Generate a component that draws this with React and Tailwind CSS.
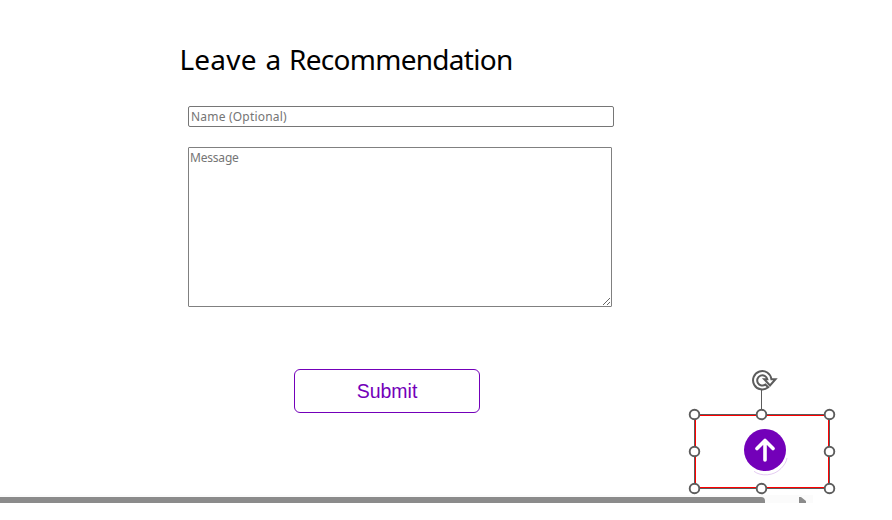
const HANDLES = [
  [694.5, 414.5], [761.5, 414.5], [829.5, 414.5],
  [694.5, 451.5], [829.5, 451.5],
  [694.5, 488.5], [761.5, 488.5], [829.5, 488.5],
];

function ScrollTopSelection() {
  return (
    <svg className="absolute left-[680px] top-[360px] h-[140px] w-[165px]" viewBox="680 360 165 140" fill="none">
      <path d="M761.5 390V414" stroke="#5c5c5c" />
      <rect x="695.5" y="415.5" width="133" height="72" stroke="#ff0000" />
      <path d="M829.5 414.5H694.5V488.5H829.5" stroke="#5c5c5c" />
      <path d="M829.5 414V489" stroke="#5c5c5c" />
      <path d="M828.5 415V488" stroke="#ff0000" />
      <path d="M754 471.3C761 476.8 774 476 781 468.5C784.5 465 786.5 461.5 787 458" stroke="#d9b6ed" strokeWidth=".7" />
      <circle cx="765" cy="450" r="21" fill="#7300b9" />
      <path d="M765 460V440.5M757 448.5L765 440.5L773 448.5" stroke="#fff" strokeWidth="3.6" strokeLinecap="round" strokeLinejoin="round" />
      {HANDLES.map(([x, y]) => (
        <circle key={`${x}-${y}`} cx={x} cy={y} r="4.8" fill="#fff" stroke="#5c5c5c" strokeWidth="1.9" />
      ))}
      <path
        d="M768.2 387.3A9.2 9.2 0 1 1 771.4 379.2H775.5L770 385.4L764.2 379.2H767.3A5.1 5.1 0 1 0 765.4 384.5Z"
        fill="#fff" stroke="#5c5c5c" strokeWidth="2" strokeLinejoin="miter"
      />
    </svg>
  );
}

export default function App() {
  return (
    <div className="relative flex h-[520px] w-[892px] flex-col overflow-hidden bg-white font-['Trebuchet_MS','Noto_Sans',sans-serif]">
      <main className="flex h-[495px] flex-col pl-[188px] pt-[39px]">
        <h1 className="-ml-[8.5px] flex h-10 whitespace-nowrap text-[28px] leading-10 text-black">
          <span className="w-[86px] tracking-[0.2px]">Leave </span>
          <span className="w-[23.5px] tracking-[-0.8px]">a </span>
          <span className="tracking-[-0.72px]">Recommendation</span>
        </h1>
        <input
          type="text"
          placeholder="Name (Optional)"
          className="mt-[27px] block h-[21px] w-[426px] rounded-[2px] border border-[#767676] bg-white px-[2px] text-[12px] leading-none tracking-[0.2px] placeholder:text-[#757575]"
        />
        <textarea
          placeholder="Message"
          className="mt-5 block h-[160px] w-[424px] shrink-0 resize rounded-[1px] border border-[#808080] bg-white px-[1px] pt-[2px] text-[12px] leading-4 tracking-[-0.2px] placeholder:text-[#757575]"
        />
        <button className="ml-[106px] mt-[62px] h-11 w-[186px] shrink-0 rounded-md border border-[#7300b9] bg-white pt-px font-['Liberation_Sans',Arial,sans-serif] text-[19.5px] text-[#7300b9]">
          Submit
        </button>
      </main>
      <div className="flex h-2 w-[813px] items-end overflow-hidden bg-[#fbfbfb]">
        <div className="h-1.5 w-[765px] rounded-tr-[4px] bg-[#8b8b8b]" />
        <svg className="ml-[34px] h-1.5 w-[7px]" viewBox="0 0 7 6">
          <path d="M0 0H2L7 4V6H0Z" fill="#8b8b8b" />
        </svg>
      </div>
      <ScrollTopSelection />
    </div>
  );
}
